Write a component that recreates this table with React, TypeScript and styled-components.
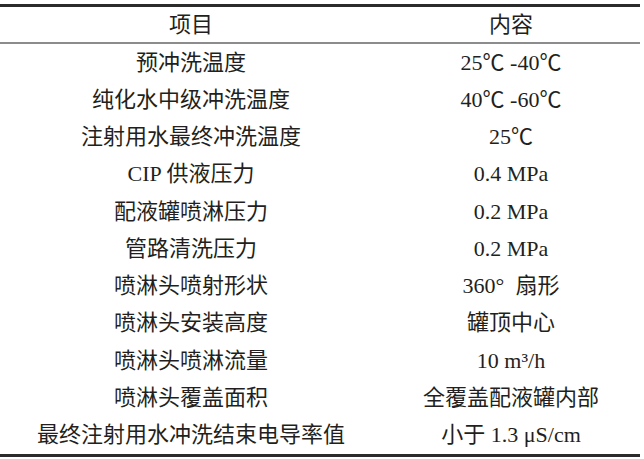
import React from "react";
import styled, { createGlobalStyle } from "styled-components";

const Global = createGlobalStyle`
  html, body { margin: 0; padding: 0; background: #ffffff; }
  body {
    font-family: "Liberation Serif", "Noto Sans CJK SC", serif;
    color: #231f20;
  }
`;

const Page = styled.div`
  padding-top: 4px;
  width: 644px;
`;

const Table = styled.div`
  width: 640px;
  border-top: 3px solid #2b2b2b;
  border-bottom: 3px solid #2b2b2b;
  display: flex;
  flex-direction: column;
`;

const Row = styled.div<{ $head?: boolean }>`
  display: grid;
  grid-template-columns: 382px 258px;
  height: ${(p) => (p.$head ? "35px" : "37.27px")};
  border-bottom: ${(p) => (p.$head ? "2px solid #8c8c8c" : "none")};
`;

const Cell = styled.div`
  display: flex;
  align-items: center;
  justify-content: center;
  font-size: 22px;
  line-height: 1;
  white-space: nowrap;
`;

const rows: [string, string][] = [
  ["预冲洗温度", "25℃ -40℃"],
  ["纯化水中级冲洗温度", "40℃ -60℃"],
  ["注射用水最终冲洗温度", "25℃"],
  ["CIP 供液压力", "0.4 MPa"],
  ["配液罐喷淋压力", "0.2 MPa"],
  ["管路清洗压力", "0.2 MPa"],
  ["喷淋头喷射形状", "360°\u00a0\u00a0扇形"],
  ["喷淋头安装高度", "罐顶中心"],
  ["喷淋头喷淋流量", "10 m³/h"],
  ["喷淋头覆盖面积", "全覆盖配液罐内部"],
  ["最终注射用水冲洗结束电导率值", "小于 1.3 μS/cm"],
];

export default function App() {
  return (
    <Page>
      <Global />
      <Table>
        <Row $head>
          <Cell>项目</Cell>
          <Cell>内容</Cell>
        </Row>
        {rows.map(([a, b]) => (
          <Row key={a}>
            <Cell>{a}</Cell>
            <Cell>{b}</Cell>
          </Row>
        ))}
      </Table>
    </Page>
  );
}
